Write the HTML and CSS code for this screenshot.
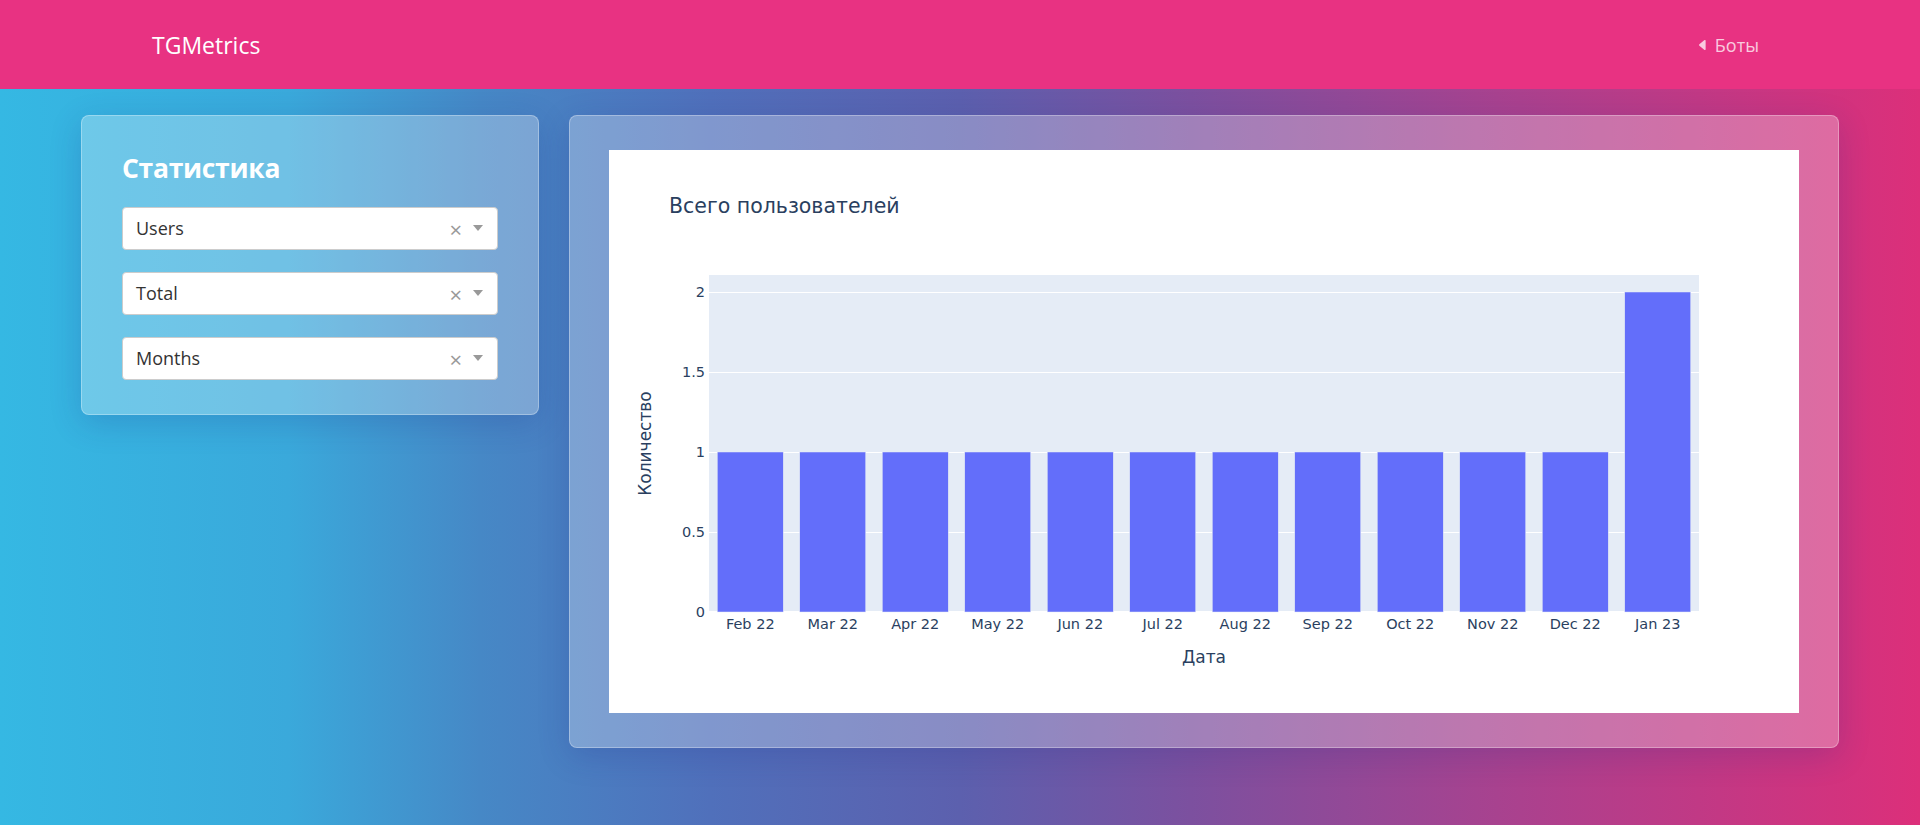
FILE: index.html
```html
<!DOCTYPE html>
<html lang="ru">
<head>
    <meta charset="UTF-8">
    <meta name="viewport" content="width=device-width, initial-scale=1.0">
    <title>TGMetrics</title>
    <link rel="stylesheet" href="styles.css">
</head>
<body>
    <header class="navbar">
        <a class="brand" href="#">TGMetrics</a>
        <a class="nav-link" href="#">
            <svg class="caret" width="14" height="14" viewBox="0 0 16 16"><path fill="currentColor" d="m3.86 8.753 5.482 4.796c.646.566 1.658.106 1.658-.753V3.204a1 1 0 0 0-1.659-.753l-5.48 4.796a1 1 0 0 0 0 1.506z"/></svg>
            Боты
        </a>
    </header>

    <main class="layout">
        <section class="glass filters">
            <h3>Статистика</h3>
            <div class="select">
                <span class="select-value">Users</span>
                <span class="select-clear">×</span>
                <span class="select-arrow"></span>
            </div>
            <div class="select">
                <span class="select-value">Total</span>
                <span class="select-clear">×</span>
                <span class="select-arrow"></span>
            </div>
            <div class="select">
                <span class="select-value">Months</span>
                <span class="select-clear">×</span>
                <span class="select-arrow"></span>
            </div>
        </section>

        <section class="glass chart-card">
            <div class="chart">
                <svg width="1190" height="563" viewBox="0 0 1190 563">
                    <!-- заголовок -->
                    <text class="chart-title" x="60" y="63">Всего пользователей</text>

                    <!-- область графика -->
                    <rect x="100" y="125" width="990" height="337" fill="#E5ECF6"/>
                    <g stroke="#ffffff" stroke-width="1">
                        <line x1="100" x2="1090" y1="142.5" y2="142.5"/>
                        <line x1="100" x2="1090" y1="222.5" y2="222.5"/>
                        <line x1="100" x2="1090" y1="302.5" y2="302.5"/>
                        <line x1="100" x2="1090" y1="382.5" y2="382.5"/>
                    </g>
                    <line x1="100" x2="1090" y1="462" y2="462" stroke="#ffffff" stroke-width="2"/>

                    <!-- столбцы -->
                    <g fill="#636EFA" stroke="#E5ECF6" stroke-width="0.5">
                        <rect x="108.25" y="302" width="66" height="160"/>
                        <rect x="190.75" y="302" width="66" height="160"/>
                        <rect x="273.25" y="302" width="66" height="160"/>
                        <rect x="355.75" y="302" width="66" height="160"/>
                        <rect x="438.25" y="302" width="66" height="160"/>
                        <rect x="520.75" y="302" width="66" height="160"/>
                        <rect x="603.25" y="302" width="66" height="160"/>
                        <rect x="685.75" y="302" width="66" height="160"/>
                        <rect x="768.25" y="302" width="66" height="160"/>
                        <rect x="850.75" y="302" width="66" height="160"/>
                        <rect x="933.25" y="302" width="66" height="160"/>
                        <rect x="1015.75" y="142" width="66" height="320"/>
                    </g>

                    <!-- ось Y -->
                    <g class="tick" text-anchor="end">
                        <text x="96" y="147">2</text>
                        <text x="96" y="227">1.5</text>
                        <text x="96" y="307">1</text>
                        <text x="96" y="387">0.5</text>
                        <text x="96" y="467">0</text>
                    </g>

                    <!-- ось X -->
                    <g class="tick" text-anchor="middle">
                        <text x="141.25" y="479">Feb 22</text>
                        <text x="223.75" y="479">Mar 22</text>
                        <text x="306.25" y="479">Apr 22</text>
                        <text x="388.75" y="479">May 22</text>
                        <text x="471.25" y="479">Jun 22</text>
                        <text x="553.75" y="479">Jul 22</text>
                        <text x="636.25" y="479">Aug 22</text>
                        <text x="718.75" y="479">Sep 22</text>
                        <text x="801.25" y="479">Oct 22</text>
                        <text x="883.75" y="479">Nov 22</text>
                        <text x="966.25" y="479">Dec 22</text>
                        <text x="1048.75" y="479">Jan 23</text>
                    </g>

                    <text class="axis-title" x="595" y="513" text-anchor="middle">Дата</text>
                    <text class="axis-title" x="0" y="0" text-anchor="middle" transform="translate(42 293.5) rotate(-90)">Количество</text>
                </svg>
            </div>
        </section>
    </main>
</body>
</html>
```

FILE: styles.css
```css
body {
    margin: 0;
    min-height: 100vh;
    font-family: 'Open Sans', 'Noto Sans', sans-serif;
    background: linear-gradient(to right, #35b8e3 0%, #3aa9db 15%, #4688c6 25%, #5070bb 37%, #5c60ae 50%, #7c509f 62%, #a8428f 78%, #dc2f7a 100%);
    background-attachment: fixed;
}

a {
    text-decoration: none;
}

.navbar {
    height: 89px;
    background-color: #e83282;
    display: flex;
    align-items: center;
    justify-content: space-between;
    padding: 0 161px 0 152px;
}

.brand {
    color: #ffffff;
    font-size: 23px;
}

.nav-link {
    display: flex;
    align-items: center;
    gap: 5px;
    color: rgba(255, 255, 255, 0.75);
    font-size: 18px;
}

    .nav-link .caret {
        margin-left: -4px;
    }

.layout {
    display: grid;
    grid-template-columns: 458px 1fr;
    gap: 30px;
    align-items: start;
    padding: 26px 81px 0;
}

.glass {
    background: rgba(255, 255, 255, 0.28);
    border: 1px solid rgba(255, 255, 255, 0.3);
    border-radius: 8px;
    box-shadow: 0 8px 32px rgba(31, 38, 135, 0.2);
}

.filters {
    padding: 37px 40px 34px;
}

    .filters h3 {
        margin: 0 0 22px;
        color: #ffffff;
        font-size: 26.5px;
        font-weight: 700;
        line-height: 1.2;
        letter-spacing: -0.3px;
    }

.select {
    height: 43px;
    box-sizing: border-box;
    background: #ffffff;
    border: 1px solid #cccccc;
    border-radius: 4px;
    display: flex;
    align-items: center;
    padding: 0 14px 0 13px;
    margin-bottom: 22px;
}

    .select:last-child {
        margin-bottom: 0;
    }

.select-value {
    flex: 1;
    color: #333333;
    font-size: 18px;
}

.select-clear {
    color: #999999;
    font-size: 22px;
    line-height: 1;
    margin-right: 11px;
    margin-top: 1px;
}

.select-arrow {
    width: 0;
    height: 0;
    border-style: solid;
    border-width: 6px 5.5px 0;
    border-color: #999999 transparent transparent;
}

.chart-card {
    padding: 34px 39px;
}

.chart {
    background: #ffffff;
    height: 563px;
}

    .chart svg {
        display: block;
        font-family: 'DejaVu Sans', Verdana, sans-serif;
    }

.chart-title {
    font-size: 20.5px;
    fill: #2a3f5f;
}

.tick {
    font-size: 14.5px;
    fill: #2a3f5f;
}

.axis-title {
    font-size: 17px;
    fill: #2a3f5f;
}
```
